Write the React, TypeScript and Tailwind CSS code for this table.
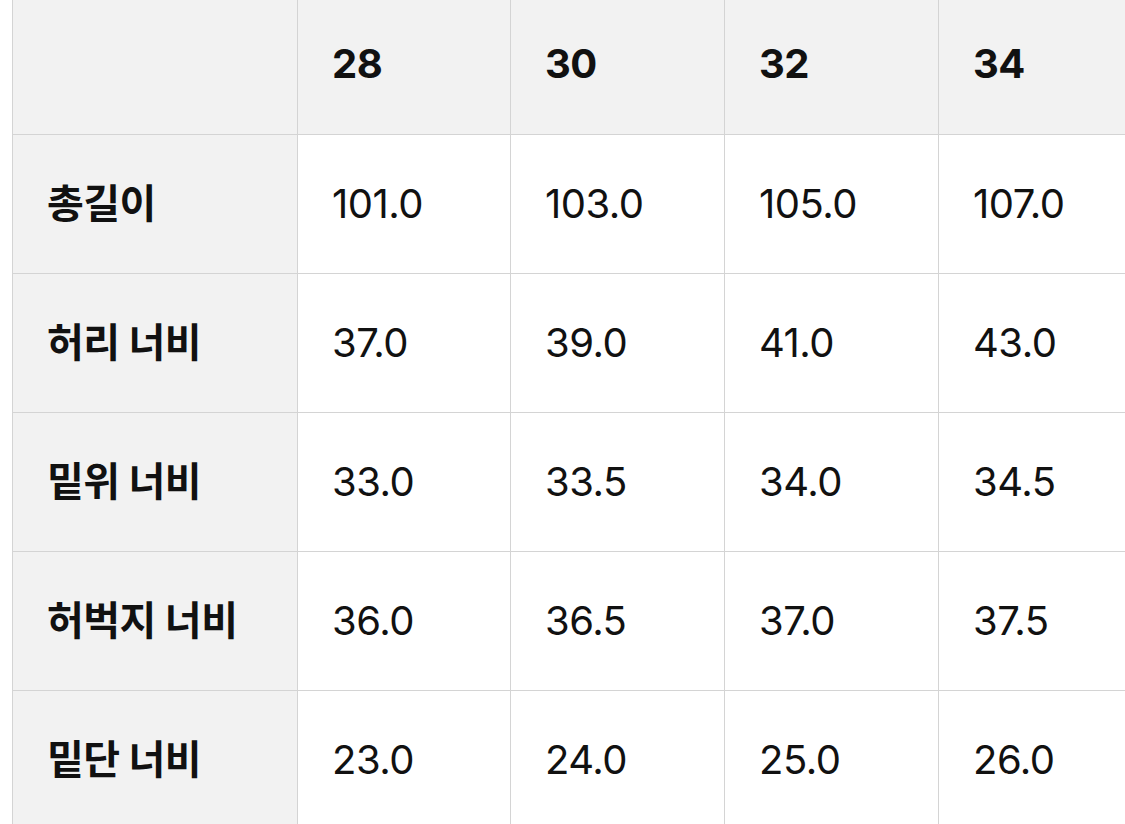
import React from "react";

const sizes = ["28", "30", "32", "34"];

const rows = [
  { label: "총길이", values: ["101.0", "103.0", "105.0", "107.0"] },
  { label: "허리 너비", values: ["37.0", "39.0", "41.0", "43.0"] },
  { label: "밑위 너비", values: ["33.0", "33.5", "34.0", "34.5"] },
  { label: "허벅지 너비", values: ["36.0", "36.5", "37.0", "37.5"] },
  { label: "밑단 너비", values: ["23.0", "24.0", "25.0", "26.0"] },
];

// last column runs off the right edge, so no right border there
const cell = "flex items-center pl-[34px] border-b border-[#d4d4d4]";
const divider = (i: number) => (i < 3 ? "border-r" : "");

export default function App() {
  return (
    <div
      className="w-[1125px] h-[824px] overflow-hidden bg-white pl-[12px] text-[#111]"
      style={{ fontFamily: 'Inter, "Noto Sans CJK KR", sans-serif' }}
    >
      <div className="grid grid-cols-[285px_213px_214px_214px_1fr] border-l border-[#d4d4d4] text-[40px] tracking-[-0.5px]">
        {/* header */}
        <div className={`${cell} border-r h-[135px] bg-[#f2f2f2]`} />
        {sizes.map((s, i) => (
          <div key={s} className={`${cell} ${divider(i)} h-[135px] pb-[6px] bg-[#f2f2f2] font-bold`}>
            {s}
          </div>
        ))}

        {/* body */}
        {rows.map((r) => (
          <React.Fragment key={r.label}>
            <div className={`${cell} border-r h-[139px] bg-[#f2f2f2] font-bold`}>{r.label}</div>
            {r.values.map((v, i) => (
              <div key={i} className={`${cell} ${divider(i)} h-[139px] bg-white`}>
                {v}
              </div>
            ))}
          </React.Fragment>
        ))}
      </div>
    </div>
  );
}
